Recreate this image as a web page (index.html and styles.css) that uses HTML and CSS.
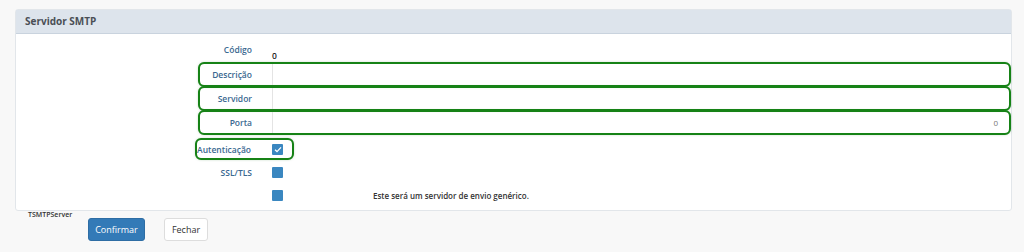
FILE: index.html
```html
<!DOCTYPE html>
<html lang="pt">
<head>
  <meta charset="UTF-8" />
  <title>Servidor SMTP</title>
  <link rel="stylesheet" href="styles.css">
</head>
<body>
  <div class="panel">
    <div class="panel-head">Servidor SMTP</div>
    <div class="panel-body">
      <div class="row row-code">
        <label class="lbl">Código</label>
        <span class="val">0</span>
      </div>
      <div class="row field hl">
        <label class="lbl">Descrição</label>
        <div class="input"></div>
      </div>
      <div class="row field hl">
        <label class="lbl">Servidor</label>
        <div class="input"></div>
      </div>
      <div class="row field hl">
        <label class="lbl">Porta</label>
        <div class="input num">0</div>
      </div>
      <div class="row check hl hl-auth">
        <label class="lbl">Autenticação</label>
        <span class="box on">
          <svg width="8" height="7" viewBox="0 0 8 7"><path d="M1 3.8 L3 5.6 L7 1.4" fill="none" stroke="#fff" stroke-width="1.3"/></svg>
        </span>
      </div>
      <div class="row check">
        <label class="lbl">SSL/TLS</label>
        <span class="box"></span>
      </div>
      <div class="row check">
        <label class="lbl"></label>
        <span class="box"></span>
        <span class="note">Este será um servidor de envio genérico.</span>
      </div>
    </div>
  </div>
  <div class="footer">
    <span class="cls">TSMTPServer</span>
    <button class="btn btn-primary">Confirmar</button>
    <button class="btn btn-default">Fechar</button>
  </div>
</body>
</html>
```

FILE: styles.css
```css
body {
  margin: 0;
  background-color: #f8f8f8;
  font-family: "Open Sans", Arial, sans-serif;
  color: #333;
}

.panel {
  margin: 9px 12px 0 15px;
  height: 202px;
  background-color: #ffffff;
  border: 1px solid #e2e6ea;
  border-radius: 3px;
  box-sizing: border-box;
}

.panel-head {
  height: 24px;
  line-height: 22px;
  padding-left: 9px;
  background-color: #dde4ec;
  border-bottom: 1px solid #c9d3de;
  font-size: 10px;
  font-weight: 700;
  color: #4a4f55;
  box-sizing: border-box;
}

.panel-body {
  padding-top: 6px;
}

.row {
  display: flex;
  align-items: center;
  margin-left: 184px;
  margin-right: 2px;
}

.lbl {
  width: 72px;
  padding-right: 20px;
  text-align: right;
  font-size: 8.5px;
  font-weight: 600;
  color: #3a6890;
  box-sizing: border-box;
  white-space: nowrap;
}

.row-code {
  height: 21px;
  align-items: flex-start;
}

.row-code .lbl {
  margin-top: 4px;
}

.row-code .val {
  margin-top: 10px;
  font-size: 8.5px;
  font-weight: 600;
  color: #222;
}

.field {
  height: 21px;
  margin-top: 3px;
  margin-bottom: 1px;
}

.input {
  flex: 1;
  height: 100%;
  border-left: 1px solid #e4e4e4;
  font-size: 8px;
  line-height: 21px;
  padding-right: 11px;
  color: #777;
}

.num {
  text-align: right;
}

.hl {
  outline: 2px solid #168216;
  outline-offset: 0;
  border-radius: 4px;
  box-shadow: 0 0 3px 1px rgba(20, 110, 20, 0.5);
}

.check {
  height: 18px;
  margin-top: 5px;
}

.hl-auth {
  width: 95px;
  margin-left: 181px;
  margin-top: 7px;
  height: 18px;
}

.hl-auth .lbl {
  width: 75px;
  padding-right: 21px;
}

.box {
  width: 11px;
  height: 11px;
  background-color: #3a87c0;
  border-radius: 1px;
  display: flex;
  align-items: center;
  justify-content: center;
}

.note {
  margin-left: 90px;
  font-size: 8px;
  font-weight: 600;
  color: #333;
}

.footer {
  display: flex;
  align-items: flex-start;
  padding-left: 28px;
}

.cls {
  font-size: 7px;
  font-weight: 600;
  color: #333;
  margin-top: -1px;
  width: 60px;
}

.btn {
  font-family: "Open Sans", Arial, sans-serif;
  font-size: 9px;
  height: 23px;
  border-radius: 3px;
  margin-top: 7px;
  cursor: pointer;
}

.btn-primary {
  width: 57px;
  background-color: #337ab7;
  border: 1px solid #2e6da4;
  color: #fff;
}

.btn-default {
  width: 44px;
  margin-left: 19px;
  background-color: #fff;
  border: 1px solid #ddd;
  color: #333;
}
```
